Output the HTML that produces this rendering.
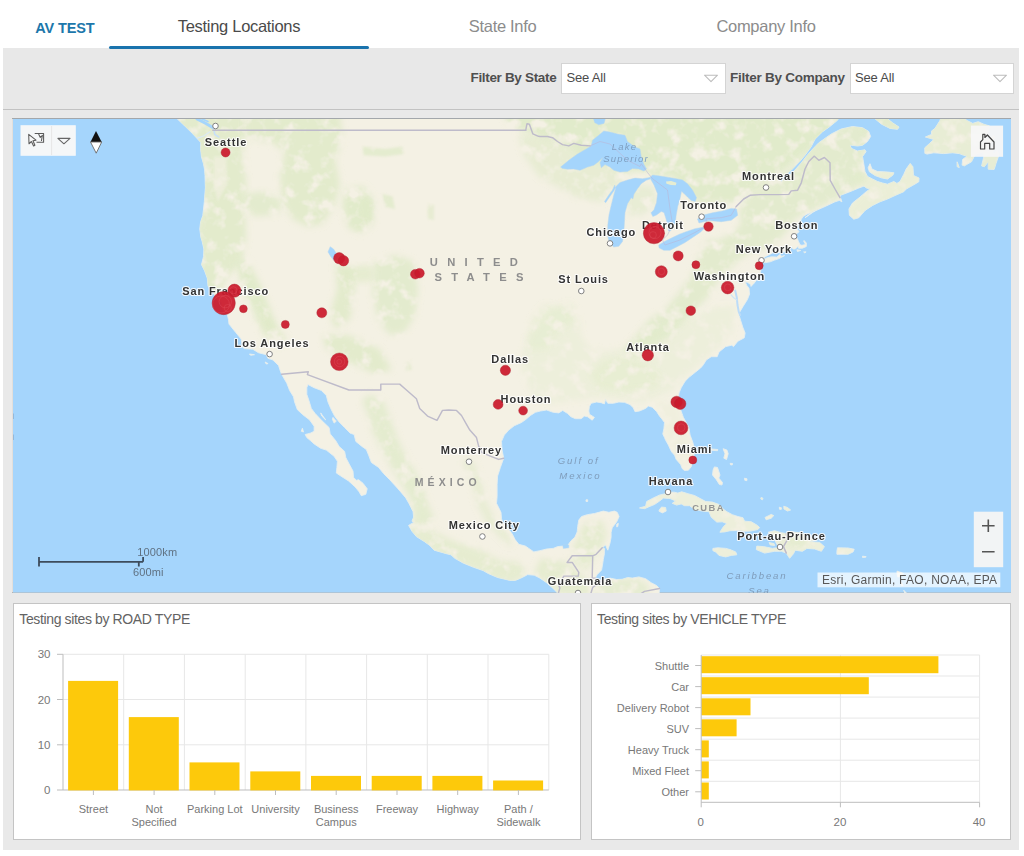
<!DOCTYPE html>
<html lang="en">
<head>
<meta charset="utf-8">
<title>AV TEST</title>
<style>
*{box-sizing:border-box}
html,body{margin:0;padding:0;background:#fff}
body{width:1024px;height:856px;position:relative;overflow:hidden;font-family:"Liberation Sans",sans-serif;color:#4c4c4c}
.abs{position:absolute}
#hdr{left:0;top:0;width:1024px;height:48px;background:#fff}
h1{margin:0}
a{text-decoration:none;display:block}
form{margin:0}
#brand{left:35.3px;top:19.5px;font-size:14.5px;font-weight:bold;color:#1c77ab;letter-spacing:-0.15px;line-height:17px;white-space:nowrap}
.tab{top:15.5px;height:20px;line-height:20px;font-size:16.5px;text-align:center;white-space:nowrap;color:#8c8c8c;letter-spacing:-0.3px}
#tab1{color:#4a4a4a}
#uline{left:109.3px;top:45.7px;width:259.8px;height:3px;background:#1a73ad;border-radius:1.5px;z-index:5}
#shell{left:3px;top:48px;width:1016px;height:802px;background:#e9e9e9}
#fbar{left:3px;top:48px;width:1016px;height:61.8px;background:#e8e8e8;border-bottom:1.6px solid #c2c2c2}
.flabel{top:69.3px;font-size:13.5px;font-weight:bold;color:#4f4f4f;letter-spacing:-0.33px;line-height:18px;white-space:nowrap}
.fsel{top:63px;height:30.5px;background:#fff;border:1px solid #d4d4d4;font-size:13px;line-height:28px;padding-left:4.5px;color:#4c4c4c;letter-spacing:-0.2px}
.panel{background:#fff;border:1px solid #c4c4c4}
.ptitle{margin:0;font-weight:normal;font-size:14px;color:#636363;letter-spacing:-0.37px;line-height:16px;white-space:nowrap}
svg{display:block}
svg text{font-family:"Liberation Sans",sans-serif}
</style>
</head>
<body>
<div id="shell" class="abs"></div>
<header>
<div id="hdr" class="abs"></div>
<h1 id="brand" class="abs">AV TEST</h1>
<nav aria-label="Pages">
<a id="tab1" class="abs tab" role="tab" aria-selected="true" style="left:109px;width:260px">Testing Locations</a>
<a id="tab2" class="abs tab" role="tab" style="left:372.6px;width:260px">State Info</a>
<a id="tab3" class="abs tab" role="tab" style="left:636px;width:260px">Company Info</a>
<div id="uline" class="abs"></div>
</nav>
</header>
<form id="filters">
<div id="fbar" class="abs"></div>
<label class="abs flabel" style="left:470.5px">Filter By State</label>
<div class="abs fsel" role="combobox" aria-label="Filter By State" tabindex="0" style="left:561px;width:164.5px">See All</div>
<svg class="abs" style="left:703px;top:74px" width="16" height="9" viewBox="0 0 16 9" aria-hidden="true"><path d="M1.5 1.2 L14.5 1.2 L8 7.6 Z" fill="none" stroke="#bdbdbd" stroke-width="1.1" stroke-linejoin="round"/></svg>
<label class="abs flabel" style="left:730px;letter-spacing:-0.26px">Filter By Company</label>
<div class="abs fsel" role="combobox" aria-label="Filter By Company" tabindex="0" style="left:849.5px;width:164px">See All</div>
<svg class="abs" style="left:991.5px;top:74px" width="16" height="9" viewBox="0 0 16 9" aria-hidden="true"><path d="M1.5 1.2 L14.5 1.2 L8 7.6 Z" fill="none" stroke="#bdbdbd" stroke-width="1.1" stroke-linejoin="round"/></svg>
</form>
<main>
<section aria-label="Map of testing locations">
<div class="abs" style="left:12.3px;top:118.4px;width:998.7px;height:474.9px;background:linear-gradient(#a3a7ab,#a3a7ab 1px,#e3dfdb 1px,#e3dfdb 473.5px,#b4b4b4 473.5px)"></div>
<svg class="abs" style="left:13px;top:119px" width="998" height="473.5" viewBox="13 119 998 473.5">
<defs><filter id="bl" x="-20%" y="-20%" width="140%" height="140%"><feGaussianBlur stdDeviation="3"/></filter><filter id="bl2" x="-20%" y="-20%" width="140%" height="140%"><feGaussianBlur stdDeviation="1.2"/></filter><filter id="mot" x="13" y="119" width="998" height="474" filterUnits="userSpaceOnUse"><feTurbulence type="fractalNoise" baseFrequency="0.075" numOctaves="3" seed="7" result="n"/><feColorMatrix in="n" type="matrix" values="0 0 0 0 0 0 0 0 0 0 0 0 0 0 0 3.6 0 0 0 -0.85" result="a"/><feComposite in="SourceGraphic" in2="a" operator="in"/></filter><clipPath id="landclip"><path d="M168.3 109.6L176.7 118.3L185.6 126.8L192.5 133.6L197.2 138.6L200.8 142.5L200.6 148.7L201.5 156.9L203.4 163.5L204.5 169.2L205 175.6L205.4 187.6L204.3 201.8L202.8 215.7L200.6 221.9L199.8 228.9L200.8 237L202.2 241.5L203.9 249L203.6 256.4L201.5 264.6L204.7 271L207.3 278.2L208 286.1L213.4 292.6L216.2 299.6L221.7 302.5L221.7 306.7L223.9 312.3L227.3 314.4L228.4 319.2L229 324.1L235.6 332.3L241.2 339.1L242.3 346.9L244.3 348.6L252.9 349.3L258.4 352.7L266.2 354.7L267.9 358.3L272.9 360L278.5 365.4L280.7 372L281.8 374.6L286.8 383.2L289.6 390.4L293.5 396.8L294.6 402L297.4 409.7L302.9 414.8L309.6 419.9L314.1 426.3L314.1 431.3L310.2 433.2L305.2 434.5L306.8 437.6L310.7 440.8L314.1 443.9L320.7 448.3L326.3 450.1L334.1 456.3L337.4 461.3L336.9 467.4L336.3 473L340.8 476L348.5 480.9L355.2 487L359.1 491.8L361.3 495.7L365.8 494.3L367.2 488.8L363 483.3L358.6 479.7L356.3 480.3L353.5 477.3L353 471.1L349.7 465L345.8 457.6L344.6 451.4L339.1 446.4L335.8 440.8L330.2 433.9L329.1 427.6L321.8 420.6L315.2 413.6L311.3 408.4L309 400.7L306.8 394.3L306.8 387.7L307.9 384.5L314.1 387.7L321.3 390.4L326.3 395.5L328 402L330.7 408.4L334.6 416.1L339.1 421.9L344.6 427.6L350.2 433.2L354.1 434.5L355.8 441.4L361.9 446.4L366.3 449.5L368.6 455.1L371.4 462.5L378.6 467.4L383.6 473.6L389.7 479.7L396.4 487L400.6 491.8L405.8 497.9L409.2 503.9L413.1 511.7L413.6 517.1L412 521.2L413.6 522.4L408.6 525.4L412 531.3L416.4 536.6L424.2 541.4L429.8 545.5L434.2 550.2L446.4 553.7L450.9 554.8L454.8 558.3L463.1 563L473.1 567.1L483.2 570.6L488.2 573.5L497.6 577.5L509.9 580.4L515.4 580.4L522.1 577.5L527.7 574.6L534.3 575.2L539.9 578.1L546.6 582.7L553.2 588.5L558.2 593.7L566.6 600L577.7 602.3L656.7 602.3L658.9 596.5L659.5 588.5L656.7 585.6L651.1 582.7L645.6 578.7L638.9 576.9L632.2 578.1L627.8 577.5L622.2 579.3L616.7 579.5L610 578.1L606.1 578.7L602.2 580.4L598.9 579.8L595.5 577.5L597.2 574.6L601.6 570L602.8 563L603.3 559.5L604.4 553.7L604.4 548.4L602.2 547.8L605.5 544.9L607.8 550.2L610 543.1L611.1 537.2L611.1 532.5L612.2 527.8L616.7 521.8L619.1 516.5L617.2 512.3L614.4 511.1L608.9 512.3L603.3 511.1L594.4 513.5L587.2 514.7L581.6 516.5L578.8 520L577.7 526.6L577.2 531.9L574.9 537.2L571 540.8L567.7 545.5L562.7 546.1L557.7 546.6L553.2 548.4L546.6 549L539.9 550.7L533.8 551.9L528.8 548.4L525.4 546.1L518.8 544.3L515.1 539.6L512.1 533.7L507.6 527.8L503.2 523L501.5 518.9L501 512.3L496.5 503.3L497.1 496.7L497.1 484.6L497.6 476L500.4 467.4L503.7 458.2L502.1 450.1L501.5 441.4L504.3 435.1L508.7 430.1L514.3 425.7L521.5 422.5L526 419.3L530.4 415.5L535.4 412.3L540.5 411L546.6 410L553.2 412.3L558.8 412.9L562.7 410.4L567.7 413.6L571 416.8L575.5 418.7L581.1 418.7L584.4 416.1L587.7 416.8L592.2 420.2L594.4 417.4L589.4 414.2L588.8 411L589.4 406.5L591.1 403.3L596.6 402L601.1 402.7L604.4 403.9L605.5 399.4L607.8 403.3L613.3 403.3L618.9 402L624.4 402.3L630 404.6L633.3 407.8L635 411.7L639.5 411L645.6 408.4L648.4 406.1L652.3 407.2L656.7 411.7L659.5 416.1L661.7 418.7L664.5 422.5L663.9 428.8L662.8 433.9L664.5 437.6L665.6 440.1L668.4 445.1L670.1 448.9L671.7 452L674.5 455.1L676.2 459.4L680.6 464.4L682.3 468.7L684.5 470.5L688.4 470.2L691.2 466.8L693.1 460.4L694 455.1L694.5 448.9L692.9 442.6L690.1 435.1L688.7 426.9L686.2 422.5L683.4 417.4L680.6 409.7L679 403.3L678.4 398.1L679 393L681.2 387.7L685.1 381.2L689 377.3L695.6 372L700.6 368L703.4 364.7L706.2 360L711.2 356.7L717.2 356.7L719 352L725.7 346.6L731.8 345.2L733.5 346.6L737.9 341.2L744.3 337.8L745.1 333L742.9 327.5L740.7 320.6L739 315.1L739.6 312.3L742.9 306.7L747.4 299.6L749.6 294L749 288.3L746.8 285.4L745.1 281.8L747.9 282.6L750.7 284.7L750.9 286.4L753.5 284L756.8 279.7L760.2 274.6L760.9 269.6L761.3 264.5L758.5 263.7L760.7 260.8L763.5 257.9L765.7 256.4L770.2 254.2L773.5 252.4L780.2 252.4L783.5 251.9L788 251.2L789.6 249.7L790.8 246L793 249L795.2 249L798.5 246L798.5 248.2L802.4 248.2L806.3 246.5L806.3 243L804.1 240.5L803.6 241.1L805.6 244.5L801.9 245.3L800 244.8L798.5 241.5L796.9 237.8L794.7 236.3L796.3 234L799.1 231.7L796.7 228.7L798 224.9L800.2 221.1L803 216.5L806.9 214.2L811.3 212.6L815.8 210.3L805 217.7L812.5 212.1L825 206.5L835 201.8L840.6 200L840 195.5L850 191.7L858.8 188L864 186.1L866.5 188L870 189L866.2 191.7L860 197.1L852.5 203L849 209L849.4 215.3L853.8 219.2L858.8 217.7L865 210.5L872.5 205.5L880 201.8L887.5 199L895 195.5L903.8 191.7L906.2 189L912.5 185.5L918.8 181.8L919 178L913.5 175.5L912.9 166.8L910.2 163.4L906.2 169L903.8 174.3L900 181.5L896.9 183.4L893.8 181.5L887.5 184.2L882.5 183L877.5 181.5L872.5 179L867.5 176.5L865 171.5L863.8 164L862.5 156.5L866 151.7L865 149.8L857.5 151L851.5 148.5L849.8 145L857.5 146L862.5 145.3L867.5 141.5L870.6 136.5L868.8 131.5L862.5 127.7L852.5 126.5L841.2 129L831.2 134L818.8 142.8L812.5 149.3L806.2 156.5L801.3 163L792.5 172.8L781.2 181.5L780 179L791.2 170.3L800 161.2L805 155.3L811.2 146.7L815 139.2L822.5 131.8L831.2 125.5L837.5 120.2L841.2 114L168.3 109.6ZM760.9 262.6L765.7 262.6L770.2 261.8L774.6 260.1L779.1 258.6L784.6 255.6L781.3 256.4L780.2 254.2L776.9 257.1L771.3 256.8L766.8 257.9L763.5 259.3L761.1 260.8ZM870 163.7L871.9 169L877.5 171.5L887.5 172L894 172.8L892.8 175.2L887.5 179L881.2 177.8L875 175.5L869.4 171.8L868.1 167.8ZM873.8 117.7L881.2 124L890 128.4L897.5 129.3L899 127.1L892.5 122.8L886.2 117.7ZM947.1 109.6L942.1 114.8L939.8 120.8L936.5 126L934.8 128.5L931.5 131.1L931.5 134.4L925.4 137L930.9 138.6L933.7 139.5L929.3 143.7L924.8 147.8L924.8 153.3L927 154.1L933.7 152.8L943.7 153.6L952.6 152.8L959.3 153.6L963.8 155.3L967.1 156.1L962.6 159.4L962.1 165.1L964.3 165.9L971.5 161.8L974.3 156.1L977.1 153.6L982.7 152L983.8 156.9L981.6 165.9L984.3 166.7L988.2 161.8L988.2 169.2L994.1 169.5L996 163.5L998.8 155.3L997.1 150.3L993.8 154.4L992.7 152L995.5 144.5L989.3 151.1L986.6 152L989.3 145.3L994.9 137.8L993.8 135.3L988.2 139.5L985.5 138.6L988.2 131.1L989.7 126L983.8 124.2L978.2 121.7L972.7 123.4L966 120L962.6 113.1L960.4 109.6ZM639.5 507.9L645.6 506.3L646.7 501.5L653.4 497.9L660 494.9L665.6 493.7L668.9 492.1L674.5 492.2L677.8 493.1L681.7 491.8L687.9 493.7L694.5 495.5L700.1 498.5L705.7 501.5L712.3 502.1L719 504.5L723.5 509.3L726.8 511.7L732.4 514.7L737.9 516.5L742.9 517.7L744.6 521.2L751.3 521.8L757.4 525.4L759.6 527.5L757.9 529.5L750.2 531.1L744.6 531.3L739 530.5L730.1 530.7L724.6 531.9L719.9 532.2L723.5 526.6L726.8 523.6L722.3 521.8L716.8 522.1L711.2 517.1L709 511.7L702.3 511.1L694.5 509.3L689.5 505.7L684.5 505.7L681.2 503.9L676.7 505.1L672.3 503.3L675.6 500.9L670.1 498.5L663.4 498.1L658.9 501.5L654.5 504.5L650 506.3L644.5 508.7ZM661.7 507.1L665.6 507.5L666.2 511.1L662.3 512.9L658.9 511.1L660 508.7ZM712.9 548.4L717.9 547.8L725.7 548.4L730.1 549.6L735.7 551.9L736.8 554.8L731.2 555.4L725.7 556.9L719 555.4L715.7 551.9L712.9 550.7ZM768 532.3L774.6 530.7L781.3 532.7L786.3 533.5L788 531.3L798 532.5L805.8 534.3L807.5 538.4L813.6 537.8L814.7 540.2L810.2 541.4L819.7 542.5L824.4 546.6L821.4 551.3L814.7 549L806.9 548.4L802.4 551.3L795.2 550.2L793.5 553.7L789.6 558.3L786.3 553.1L781.3 551.3L774.6 551.3L764.6 553.1L756.3 549.6L756.8 546.1L763.5 546.6L772.4 548.4L776.9 547.8L779.6 547.2L776.9 544.3L775.2 540.8L775.7 536.6L770.7 534.3ZM769.1 542.5L774.1 543.7L774.6 545.5L770.2 544.9ZM837.5 547.8L848.1 548L854.2 549.2L853.1 551.9L848.1 554.3L836.9 554.3L836.9 551.3ZM723.1 448.7L726.9 450L728.2 453.7L726.5 459.5L723.8 458.2L725 453.7ZM711.5 449L717.8 449.5L717.5 450.7L711.9 450.3ZM730.2 463.3L732.5 463.5L732.2 465L730.5 464.8ZM714.4 466.9L717.5 467.5L720 475L718.8 478.1L722.5 482.5L722 485L719.4 484.5L716.2 479.5L712.5 475L713.1 470ZM744.5 478.2L747 478.8L746.8 480.7L744.8 480.3ZM761 497.5L763 498.2L762.5 499.8L760.8 499ZM765 517.5L771.2 514.4L773.8 515.6L771.2 518.2L766.2 519.8ZM779.3 507.2L781.5 507.8L781.2 509.5L779.5 509.3ZM783.8 506.2L787.5 507.5L790.6 510L787.5 511L784 509ZM586 499.8L587.7 499.8L587.7 501.5L586 501.5ZM618.3 523.3L617.8 526.6L616.7 526.9L616.7 524.2ZM862.5 556.2L866.1 556.6L865.9 557.2L862.5 557.4ZM897 571.1L903.7 573.5L899.2 576.9L897.6 576.9L897 573.5ZM900.9 581.6L903.1 585.6L901.5 585.6ZM903.7 590.2L907.6 594.2L905.4 594.8ZM796.9 249.7L800.8 250.5L797.4 251.5ZM803.6 251.9L806.1 251.9L804.7 252.8ZM249.5 354L254.5 354.7L250.6 355.3ZM265.1 362L268.1 363.6L266.2 364ZM302.4 428.2L303.5 432L301.3 431.3ZM333 417.4L336.3 421.2L334.1 423.1L332.4 419.3ZM320.7 412.9L325.7 419.9L321.8 416.1ZM840.8 198.6L841.9 201.8L840.3 201ZM957.1 161.8L959.3 167.5L957.1 166.7Z"/></clipPath></defs>
<rect x="13" y="119" width="998" height="473.5" fill="#a5d5fc"/>
<path d="M168.3 109.6L176.7 118.3L185.6 126.8L192.5 133.6L197.2 138.6L200.8 142.5L200.6 148.7L201.5 156.9L203.4 163.5L204.5 169.2L205 175.6L205.4 187.6L204.3 201.8L202.8 215.7L200.6 221.9L199.8 228.9L200.8 237L202.2 241.5L203.9 249L203.6 256.4L201.5 264.6L204.7 271L207.3 278.2L208 286.1L213.4 292.6L216.2 299.6L221.7 302.5L221.7 306.7L223.9 312.3L227.3 314.4L228.4 319.2L229 324.1L235.6 332.3L241.2 339.1L242.3 346.9L244.3 348.6L252.9 349.3L258.4 352.7L266.2 354.7L267.9 358.3L272.9 360L278.5 365.4L280.7 372L281.8 374.6L286.8 383.2L289.6 390.4L293.5 396.8L294.6 402L297.4 409.7L302.9 414.8L309.6 419.9L314.1 426.3L314.1 431.3L310.2 433.2L305.2 434.5L306.8 437.6L310.7 440.8L314.1 443.9L320.7 448.3L326.3 450.1L334.1 456.3L337.4 461.3L336.9 467.4L336.3 473L340.8 476L348.5 480.9L355.2 487L359.1 491.8L361.3 495.7L365.8 494.3L367.2 488.8L363 483.3L358.6 479.7L356.3 480.3L353.5 477.3L353 471.1L349.7 465L345.8 457.6L344.6 451.4L339.1 446.4L335.8 440.8L330.2 433.9L329.1 427.6L321.8 420.6L315.2 413.6L311.3 408.4L309 400.7L306.8 394.3L306.8 387.7L307.9 384.5L314.1 387.7L321.3 390.4L326.3 395.5L328 402L330.7 408.4L334.6 416.1L339.1 421.9L344.6 427.6L350.2 433.2L354.1 434.5L355.8 441.4L361.9 446.4L366.3 449.5L368.6 455.1L371.4 462.5L378.6 467.4L383.6 473.6L389.7 479.7L396.4 487L400.6 491.8L405.8 497.9L409.2 503.9L413.1 511.7L413.6 517.1L412 521.2L413.6 522.4L408.6 525.4L412 531.3L416.4 536.6L424.2 541.4L429.8 545.5L434.2 550.2L446.4 553.7L450.9 554.8L454.8 558.3L463.1 563L473.1 567.1L483.2 570.6L488.2 573.5L497.6 577.5L509.9 580.4L515.4 580.4L522.1 577.5L527.7 574.6L534.3 575.2L539.9 578.1L546.6 582.7L553.2 588.5L558.2 593.7L566.6 600L577.7 602.3L656.7 602.3L658.9 596.5L659.5 588.5L656.7 585.6L651.1 582.7L645.6 578.7L638.9 576.9L632.2 578.1L627.8 577.5L622.2 579.3L616.7 579.5L610 578.1L606.1 578.7L602.2 580.4L598.9 579.8L595.5 577.5L597.2 574.6L601.6 570L602.8 563L603.3 559.5L604.4 553.7L604.4 548.4L602.2 547.8L605.5 544.9L607.8 550.2L610 543.1L611.1 537.2L611.1 532.5L612.2 527.8L616.7 521.8L619.1 516.5L617.2 512.3L614.4 511.1L608.9 512.3L603.3 511.1L594.4 513.5L587.2 514.7L581.6 516.5L578.8 520L577.7 526.6L577.2 531.9L574.9 537.2L571 540.8L567.7 545.5L562.7 546.1L557.7 546.6L553.2 548.4L546.6 549L539.9 550.7L533.8 551.9L528.8 548.4L525.4 546.1L518.8 544.3L515.1 539.6L512.1 533.7L507.6 527.8L503.2 523L501.5 518.9L501 512.3L496.5 503.3L497.1 496.7L497.1 484.6L497.6 476L500.4 467.4L503.7 458.2L502.1 450.1L501.5 441.4L504.3 435.1L508.7 430.1L514.3 425.7L521.5 422.5L526 419.3L530.4 415.5L535.4 412.3L540.5 411L546.6 410L553.2 412.3L558.8 412.9L562.7 410.4L567.7 413.6L571 416.8L575.5 418.7L581.1 418.7L584.4 416.1L587.7 416.8L592.2 420.2L594.4 417.4L589.4 414.2L588.8 411L589.4 406.5L591.1 403.3L596.6 402L601.1 402.7L604.4 403.9L605.5 399.4L607.8 403.3L613.3 403.3L618.9 402L624.4 402.3L630 404.6L633.3 407.8L635 411.7L639.5 411L645.6 408.4L648.4 406.1L652.3 407.2L656.7 411.7L659.5 416.1L661.7 418.7L664.5 422.5L663.9 428.8L662.8 433.9L664.5 437.6L665.6 440.1L668.4 445.1L670.1 448.9L671.7 452L674.5 455.1L676.2 459.4L680.6 464.4L682.3 468.7L684.5 470.5L688.4 470.2L691.2 466.8L693.1 460.4L694 455.1L694.5 448.9L692.9 442.6L690.1 435.1L688.7 426.9L686.2 422.5L683.4 417.4L680.6 409.7L679 403.3L678.4 398.1L679 393L681.2 387.7L685.1 381.2L689 377.3L695.6 372L700.6 368L703.4 364.7L706.2 360L711.2 356.7L717.2 356.7L719 352L725.7 346.6L731.8 345.2L733.5 346.6L737.9 341.2L744.3 337.8L745.1 333L742.9 327.5L740.7 320.6L739 315.1L739.6 312.3L742.9 306.7L747.4 299.6L749.6 294L749 288.3L746.8 285.4L745.1 281.8L747.9 282.6L750.7 284.7L750.9 286.4L753.5 284L756.8 279.7L760.2 274.6L760.9 269.6L761.3 264.5L758.5 263.7L760.7 260.8L763.5 257.9L765.7 256.4L770.2 254.2L773.5 252.4L780.2 252.4L783.5 251.9L788 251.2L789.6 249.7L790.8 246L793 249L795.2 249L798.5 246L798.5 248.2L802.4 248.2L806.3 246.5L806.3 243L804.1 240.5L803.6 241.1L805.6 244.5L801.9 245.3L800 244.8L798.5 241.5L796.9 237.8L794.7 236.3L796.3 234L799.1 231.7L796.7 228.7L798 224.9L800.2 221.1L803 216.5L806.9 214.2L811.3 212.6L815.8 210.3L805 217.7L812.5 212.1L825 206.5L835 201.8L840.6 200L840 195.5L850 191.7L858.8 188L864 186.1L866.5 188L870 189L866.2 191.7L860 197.1L852.5 203L849 209L849.4 215.3L853.8 219.2L858.8 217.7L865 210.5L872.5 205.5L880 201.8L887.5 199L895 195.5L903.8 191.7L906.2 189L912.5 185.5L918.8 181.8L919 178L913.5 175.5L912.9 166.8L910.2 163.4L906.2 169L903.8 174.3L900 181.5L896.9 183.4L893.8 181.5L887.5 184.2L882.5 183L877.5 181.5L872.5 179L867.5 176.5L865 171.5L863.8 164L862.5 156.5L866 151.7L865 149.8L857.5 151L851.5 148.5L849.8 145L857.5 146L862.5 145.3L867.5 141.5L870.6 136.5L868.8 131.5L862.5 127.7L852.5 126.5L841.2 129L831.2 134L818.8 142.8L812.5 149.3L806.2 156.5L801.3 163L792.5 172.8L781.2 181.5L780 179L791.2 170.3L800 161.2L805 155.3L811.2 146.7L815 139.2L822.5 131.8L831.2 125.5L837.5 120.2L841.2 114L168.3 109.6ZM760.9 262.6L765.7 262.6L770.2 261.8L774.6 260.1L779.1 258.6L784.6 255.6L781.3 256.4L780.2 254.2L776.9 257.1L771.3 256.8L766.8 257.9L763.5 259.3L761.1 260.8ZM870 163.7L871.9 169L877.5 171.5L887.5 172L894 172.8L892.8 175.2L887.5 179L881.2 177.8L875 175.5L869.4 171.8L868.1 167.8ZM873.8 117.7L881.2 124L890 128.4L897.5 129.3L899 127.1L892.5 122.8L886.2 117.7ZM947.1 109.6L942.1 114.8L939.8 120.8L936.5 126L934.8 128.5L931.5 131.1L931.5 134.4L925.4 137L930.9 138.6L933.7 139.5L929.3 143.7L924.8 147.8L924.8 153.3L927 154.1L933.7 152.8L943.7 153.6L952.6 152.8L959.3 153.6L963.8 155.3L967.1 156.1L962.6 159.4L962.1 165.1L964.3 165.9L971.5 161.8L974.3 156.1L977.1 153.6L982.7 152L983.8 156.9L981.6 165.9L984.3 166.7L988.2 161.8L988.2 169.2L994.1 169.5L996 163.5L998.8 155.3L997.1 150.3L993.8 154.4L992.7 152L995.5 144.5L989.3 151.1L986.6 152L989.3 145.3L994.9 137.8L993.8 135.3L988.2 139.5L985.5 138.6L988.2 131.1L989.7 126L983.8 124.2L978.2 121.7L972.7 123.4L966 120L962.6 113.1L960.4 109.6ZM639.5 507.9L645.6 506.3L646.7 501.5L653.4 497.9L660 494.9L665.6 493.7L668.9 492.1L674.5 492.2L677.8 493.1L681.7 491.8L687.9 493.7L694.5 495.5L700.1 498.5L705.7 501.5L712.3 502.1L719 504.5L723.5 509.3L726.8 511.7L732.4 514.7L737.9 516.5L742.9 517.7L744.6 521.2L751.3 521.8L757.4 525.4L759.6 527.5L757.9 529.5L750.2 531.1L744.6 531.3L739 530.5L730.1 530.7L724.6 531.9L719.9 532.2L723.5 526.6L726.8 523.6L722.3 521.8L716.8 522.1L711.2 517.1L709 511.7L702.3 511.1L694.5 509.3L689.5 505.7L684.5 505.7L681.2 503.9L676.7 505.1L672.3 503.3L675.6 500.9L670.1 498.5L663.4 498.1L658.9 501.5L654.5 504.5L650 506.3L644.5 508.7ZM661.7 507.1L665.6 507.5L666.2 511.1L662.3 512.9L658.9 511.1L660 508.7ZM712.9 548.4L717.9 547.8L725.7 548.4L730.1 549.6L735.7 551.9L736.8 554.8L731.2 555.4L725.7 556.9L719 555.4L715.7 551.9L712.9 550.7ZM768 532.3L774.6 530.7L781.3 532.7L786.3 533.5L788 531.3L798 532.5L805.8 534.3L807.5 538.4L813.6 537.8L814.7 540.2L810.2 541.4L819.7 542.5L824.4 546.6L821.4 551.3L814.7 549L806.9 548.4L802.4 551.3L795.2 550.2L793.5 553.7L789.6 558.3L786.3 553.1L781.3 551.3L774.6 551.3L764.6 553.1L756.3 549.6L756.8 546.1L763.5 546.6L772.4 548.4L776.9 547.8L779.6 547.2L776.9 544.3L775.2 540.8L775.7 536.6L770.7 534.3ZM769.1 542.5L774.1 543.7L774.6 545.5L770.2 544.9ZM837.5 547.8L848.1 548L854.2 549.2L853.1 551.9L848.1 554.3L836.9 554.3L836.9 551.3ZM723.1 448.7L726.9 450L728.2 453.7L726.5 459.5L723.8 458.2L725 453.7ZM711.5 449L717.8 449.5L717.5 450.7L711.9 450.3ZM730.2 463.3L732.5 463.5L732.2 465L730.5 464.8ZM714.4 466.9L717.5 467.5L720 475L718.8 478.1L722.5 482.5L722 485L719.4 484.5L716.2 479.5L712.5 475L713.1 470ZM744.5 478.2L747 478.8L746.8 480.7L744.8 480.3ZM761 497.5L763 498.2L762.5 499.8L760.8 499ZM765 517.5L771.2 514.4L773.8 515.6L771.2 518.2L766.2 519.8ZM779.3 507.2L781.5 507.8L781.2 509.5L779.5 509.3ZM783.8 506.2L787.5 507.5L790.6 510L787.5 511L784 509ZM586 499.8L587.7 499.8L587.7 501.5L586 501.5ZM618.3 523.3L617.8 526.6L616.7 526.9L616.7 524.2ZM862.5 556.2L866.1 556.6L865.9 557.2L862.5 557.4ZM897 571.1L903.7 573.5L899.2 576.9L897.6 576.9L897 573.5ZM900.9 581.6L903.1 585.6L901.5 585.6ZM903.7 590.2L907.6 594.2L905.4 594.8ZM796.9 249.7L800.8 250.5L797.4 251.5ZM803.6 251.9L806.1 251.9L804.7 252.8ZM249.5 354L254.5 354.7L250.6 355.3ZM265.1 362L268.1 363.6L266.2 364ZM302.4 428.2L303.5 432L301.3 431.3ZM333 417.4L336.3 421.2L334.1 423.1L332.4 419.3ZM320.7 412.9L325.7 419.9L321.8 416.1ZM840.8 198.6L841.9 201.8L840.3 201ZM957.1 161.8L959.3 167.5L957.1 166.7Z" fill="#f4f1e4" stroke="#e6eeee" stroke-width="0.9" stroke-linejoin="round"/>
<g clip-path="url(#landclip)"><g filter="url(#mot)"><path d="M499.8 109.6L509.9 125.1L538.8 137L566.6 143.7L577.7 153.6L594.4 160.2L616.7 166.7L638.9 171.6L655.6 176.4L672.3 176.4L687.9 195.5L700.1 203.3L716.8 201.8L732.4 203.3L747.9 192.3L761.3 189.2L772.4 179.6L789.1 166.7L803.6 155.3L822.5 138.6L839.2 125.1L850.3 109.6L499.8 109.6Z" fill="#dfeac8" fill-opacity="0.9" filter="url(#bl)"/><path d="M518.8 133.6L523.2 153.6L538.8 176.4L556.6 186L572.2 195.5L588.8 200.2L603.3 201.8L612.2 192.3L622.2 179.6L638.9 166.7L605.5 155.3L583.3 147L549.9 137Z" fill="#dfeac8" fill-opacity="0.6" filter="url(#bl)"/><path d="M632.2 184.4L654.5 186L656.7 204.9L643.4 214.2L630 215.7L625.6 203.3Z" fill="#dfeac8" fill-opacity="0.55" filter="url(#bl)"/><path d="M750.2 192.3L739 211.1L741.3 223.4L733.5 232.5L722.3 238.5L705.7 241.5L699 251.9L696.8 266.6L687.9 281.1L676.7 295.4L665.6 309.5L650 319.2L638.9 333L627.8 345.2L624.4 354.7L633.3 357.4L647.8 347.9L665.6 338.5L681.2 324.8L694.5 310.9L707.9 296.8L716.8 282.6L730.1 268.1L741.3 257.9L752.4 251.9L765.7 247.5L776.9 241.5L785.8 232.5L794.7 218.8L810.2 211.1L828 203.3L844.7 195.5L867 179.6L861.4 163.5L867 147L872.5 121.7L850.3 123.4L828 133.6L808 150.3L796.9 163.5L783.5 174.8L766.8 187.6Z" fill="#dfeac8" fill-opacity="0.8" filter="url(#bl)"/><path d="M855.8 176.4L914.8 158.6L922.6 179.6L905.9 195.5L855.8 223.4L843.6 211.1L861.4 192.3Z" fill="#dfeac8" fill-opacity="0.45" filter="url(#bl)"/><path d="M919.3 109.6L1006 109.6L1000.5 173.2L956 171.6L921.5 156.9Z" fill="#dfeac8" fill-opacity="0.55" filter="url(#bl)"/><path d="M861.4 109.6L905.9 109.6L902.6 131.9L864.7 130.2Z" fill="#dfeac8" fill-opacity="0.8" filter="url(#bl)"/><path d="M735.7 306.7L730.1 337.1L714.6 350.6L699 364L683.4 377.3L672.3 390.4L644.5 402L622.2 399.4L600 396.8L577.7 399.4L555.5 403.3L535.4 399.4L523.2 374.6L522.1 354.7L527.7 338.5L538.8 323.4L552.1 308.1L569.9 302.5L578.8 313.7L579.9 333L587.7 346.6L605.5 352L622.2 347.9L644.5 334.4L666.7 327.5L694.5 316.4L716.8 306.7Z" fill="#dfeac8" fill-opacity="0.3" filter="url(#bl)"/><path d="M543.2 305.3L572.2 308.1L574.4 322L555.5 335.7L547.7 349.3L527.7 350.6L527.7 334.4L532.1 319.2Z" fill="#dfeac8" fill-opacity="0.4" filter="url(#bl)"/><path d="M644.5 364L661.2 374.6L655.6 387.7L627.8 391.7L600 389L588.8 374.6L605.5 360L627.8 357.4Z" fill="#dfeac8" fill-opacity="0.45" filter="url(#bl)"/><path d="M655.6 400.7L676.7 403.3L681.2 419.9L687.9 438.9L690.1 453.9L687.9 466.2L681.2 466.2L674.5 451.4L666.7 432.6L661.2 416.1Z" fill="#dfeac8" fill-opacity="0.2" filter="url(#bl)"/><path d="M369.7 394.3L383 400.7L390.8 419.9L397.5 438.9L406.4 457.6L417.5 476L425.3 494.3L428.6 506.3L434.2 518.3L427.5 525.4L412 524.2L414.2 512.3L410.8 500.3L404.2 488.2L393 469.9L381.9 451.4L373 432.6L367.5 413.6L361.9 400.7Z" fill="#dfeac8" fill-opacity="0.75" filter="url(#bl)"/><path d="M466.5 457.6L474.3 463.8L482 482.1L485.4 500.3L494.3 518.3L505.4 530.1L512.1 541.9L509.9 546.6L498.7 536L485.4 520.6L476.5 502.7L472 482.1L463.1 463.8Z" fill="#dfeac8" fill-opacity="0.6" filter="url(#bl)"/><path d="M409.7 524.2L433.1 531.3L449.8 539.6L466.5 545.5L483.2 551.3L494.3 558.3L505.4 561.8L516.5 561.8L524.3 567.7L524.3 576.9L511 582.7L494.3 579.3L477.6 571.1L449.8 559.5L422 544.3L405.3 530.1Z" fill="#dfeac8" fill-opacity="0.7" filter="url(#bl)"/><path d="M541 558.3L565.5 561.8L581.1 574.6L590 583.9L590 595.4L561 595.4L544.3 582.7L534.3 572.3Z" fill="#dfeac8" fill-opacity="0.7" filter="url(#bl)"/><path d="M584.4 523L602.2 520.6L606.6 534.9L600 551.3L591.1 563L587.7 570L572.2 563L572.2 549L578.8 536Z" fill="#dfeac8" fill-opacity="0.7" filter="url(#bl)"/><path d="M605.5 579.3L636.7 578.1L650 586.2L643.4 600L600 600L594.4 588.5Z" fill="#dfeac8" fill-opacity="0.65" filter="url(#bl)"/><path d="M633.3 488.2L761.3 488.2L833.6 524.2L861.4 559.5L705.7 565.3L633.3 518.3Z" fill="#dfeac8" fill-opacity="0.3" filter="url(#bl)"/><path d="M788 534.9L805.8 537.2L811.3 543.1L802.4 547.8L788 546.6L783.5 540.8Z" fill="#dfeac8" fill-opacity="0.6" filter="url(#bl)"/><path d="M170 114L245 114L246.2 134L242.5 151.5L246.2 181.5L245 214L246.2 236.5L242.5 259L235 269L225 279L220 294L202.5 294L197.5 269L197.5 231.5L202.5 194L197.5 156.5L182.5 134Z" fill="#dfeac8" fill-opacity="0.85" filter="url(#bl)"/><path d="M213.8 156.5L226.2 156.5L227.5 184L217.5 201.5L213.8 184Z" fill="#f4f1e4" fill-opacity="0.55" filter="url(#bl2)"/><path d="M235 259L247.5 261.5L260 284L270 309L277.5 329L267.5 331.5L255 314L242.5 289Z" fill="#dfeac8" fill-opacity="0.9" filter="url(#bl)"/><path d="M245 114L340 114L342.5 139L335 159L340 184L335 204L322.5 224L307.5 226.5L292.5 219L282.5 201.5L280 176.5L285 151.5L270 141.5L245 139Z" fill="#dfeac8" fill-opacity="0.85" filter="url(#bl)"/><path d="M245 194L265 191.5L282.5 201.5L277.5 214L255 216.5L242.5 206.5Z" fill="#dfeac8" fill-opacity="0.8" filter="url(#bl)"/><path d="M345 189L365 186.5L375 201.5L372.5 224L360 234L347.5 226.5L342.5 206.5Z" fill="#dfeac8" fill-opacity="0.9" filter="url(#bl)"/><path d="M362.5 146.5L385 149L402.5 146.5L403.8 154L385 156.5L363.8 155.2Z" fill="#dfeac8" fill-opacity="0.75" filter="url(#bl2)"/><path d="M382.5 194L392.5 196.5L395 209L385 206.5Z" fill="#dfeac8" fill-opacity="0.75" filter="url(#bl2)"/><path d="M335 264L352.5 266.5L355 289L350 319L335 329L330 314L337.5 289Z" fill="#dfeac8" fill-opacity="0.85" filter="url(#bl)"/><path d="M374 262L395 255L414 262L418 290L415 315L405 332L390 335L378 320L373 295Z" fill="#dfeac8" fill-opacity="0.8" filter="url(#bl)"/><path d="M343 267L372 265L374 281L345 283Z" fill="#dfeac8" fill-opacity="0.7" filter="url(#bl)"/><path d="M361 200L371 202L372 224L362 222Z" fill="#dfeac8" fill-opacity="0.6" filter="url(#bl2)"/><path d="M427 204L434 205L434 220L428 219Z" fill="#dfeac8" fill-opacity="0.6" filter="url(#bl2)"/><path d="M322.8 335L347.9 335L379.2 349.1L391.7 369.5L376 374.2L347.9 361.6L325.9 347.6Z" fill="#dfeac8" fill-opacity="0.85" filter="url(#bl)"/><path d="M404.2 363.2L410.5 360.1L412 369.5L405.8 371Z" fill="#dfeac8" fill-opacity="0.6" filter="url(#bl2)"/><path d="M253.9 313.1L272.7 322.5L288.4 339.7L279 346L263.3 335Z" fill="#dfeac8" fill-opacity="0.7" filter="url(#bl)"/></g></g>
<path d="M560.6 167.1L568.8 160.3L577.5 154L586.2 149L591.2 145.9L592.5 140.3L598.7 135.3L603.8 130.9L610 132.1L617.5 134L625 135.3L627.5 141.5L635 147.1L640 149L641.2 156.5L643.7 164L646.5 169L644 171L638.8 169L632.5 168.4L627.5 171.5L620 172.1L613.8 170.3L610 167.1L605 164.6L601.3 167.8L600 162.7L602.8 157.5L598.7 161.5L593.8 165.2L587.5 167.1L580 170.3L573.8 169L567.5 169.2L562.5 168.5ZM650 177.5L642.5 178.7L635 178.1L627.5 180L620 182.5L616.2 186.2L614 190.6L610 196.2L605.6 202.7L604.5 201.5L608.8 195L612.5 190L614.8 185L615.6 188.7L613.5 196.2L611 206.3L609 215L607.8 225L607.5 235L609.2 242.5L613.8 247L618.8 246.2L622.5 241.5L623.8 232.5L624.4 222.5L625 212.5L627.5 203.7L631.2 197.7L632.8 199L634 194L637.5 188.7L641.2 183.7L646.2 180.3L650 179ZM650 177.5L652.5 175L660 176L667.5 177.2L675 178.5L682.5 180L687.5 183.7L692.5 190L696.5 197.5L695.3 201.5L691.2 200.5L687.5 197L684 193.5L681.5 191.2L680 198.7L677.8 206.3L676.2 215L675.2 223.7L670 228.1L667.5 225L666 218.7L664 212.5L661.2 211.5L656.5 215L652.8 216.5L651 212.8L654 209.8L656.5 202.5L657.5 193.7L654 185L651 179.8ZM658.8 245L665 241.3L672.5 237.5L680 234L687.5 231.2L695 228.7L702.8 227.3L704.2 228.5L700 232.5L692.5 237.5L685 242.5L677.5 246.5L670 250.3L663.8 250.3L659 247.8ZM697.5 219L702.5 215.3L712.5 212.8L722.5 210.9L731.2 208.4L736.5 209L737.7 215.3L731.2 220.3L721.2 221.7L708.8 220.5L699 223ZM668.1 228.1L670.6 228.1L671 230.6L668.5 231ZM330.2 246.7L333.5 249L336.9 254.2L336.9 259.3L333.5 260.1L330.7 256.4L328 251.9ZM593.1 117.7L605.6 117.7L604 123.4L598.7 124.7L594.8 122.8ZM562.7 544.9L568.8 544.9L568.8 547.8L563.3 548.4Z" fill="#a5d5fc" stroke="#b7d6ef" stroke-width="0.5" stroke-linejoin="round"/>
<path d="M666 181.5L671.2 181L676.5 182.8L675.8 185.2L670.8 185L666.5 183.7Z" fill="#e6edd2"/>
<path d="M197 119L205.5 123.2L213.5 128" fill="none" stroke="#a5d5fc" stroke-width="3" stroke-linecap="round"/><path d="M201 118.5L208 121.5" fill="none" stroke="#a5d5fc" stroke-width="1.6" stroke-linecap="round"/><path d="M213.5 128L214.8 134.5L218.8 137" fill="none" stroke="#c9e0f6" stroke-width="1.6" stroke-linecap="round" stroke-linejoin="round"/><path d="M197.5 138.2L203.5 136L210 131.8" fill="none" stroke="#dbe9f3" stroke-width="1.3" stroke-linecap="round" stroke-linejoin="round"/><path d="M735.2 290.6L736.8 297.5L737.5 305L738.8 311.9L740.2 315.2" fill="none" stroke="#bcdcf8" stroke-width="2" stroke-linecap="round" stroke-linejoin="round"/><path d="M731.2 295L734 298.1L737 300" fill="none" stroke="#cfe4f5" stroke-width="1.2" stroke-linecap="round" stroke-linejoin="round"/>

<path d="M590 145.9L600 141.5L610 144L627.5 160.3L640 166.5L641.2 163.7L647.5 172.5L652.5 178.7L667.5 190L670 208.8L672.5 223.7L670 228.1L669.4 231.2L667.5 235L662.5 240L665 245L680 240L695 232.5L703.8 227.5L704.7 223.7L706.2 221.9L706.2 218.7L721.2 217.7L731.2 215.3L736.2 206.5" fill="none" stroke="#b9b4d6" stroke-opacity="0.55" stroke-width="1" stroke-linejoin="round" stroke-linecap="round"/>
<path d="M212.8 130.2L526 130.2L525.8 129.9L527 123.7L529.3 124.1L532.8 133.8M532.8 133.8L538.5 136.3L540 136.5L547.5 136.5L552.5 137.7L557.5 141.5L562.5 144.6L568.8 145.9L573.8 143.4L581.2 145.3L590 145.9M736.2 206.5L743.7 199L750 195.3L760 194.6L777.5 194.6L788.8 194.4L791.2 190.9L797.5 190.3L801.3 182.8L805 169L808.8 161.5L813.8 156.5L814.4 156.3L818.8 160.3L824.4 157.5L830 162.7L830.2 180.3L835 189L840 197.7M281.6 374.2L308.3 371.7L307.4 374.6L348.9 390L380.8 390L380.8 384.1L399.7 384.1L405.3 389L416.4 398.8L419.7 408.4L427.5 416.1L437 420.3L442.5 410.4L448.7 410L456.5 410.4L461.5 415.5L466.5 424.4L469.8 430.1L476.5 437.6L478.7 446.4L482 452.6L490.9 456.3L498.7 459.4L503.7 458.2M558.2 593.7L559.9 587.9L558.8 585.6L563.8 576.1L578.3 576.1L578.8 572.3L572.2 562.4L567.1 562.4L572.2 555.8L592.7 555.8M592.7 555.8L596.1 554.3L602.2 547.8M592.7 555.8L592.2 578.1L595.5 578.1M602.8 580.2L592.7 587.3L590.5 594.8M590.5 594.8L582.2 600L582.2 602.8M590.5 594.8L600 600L608.9 601.7M659.5 588.5L644.5 591.4L631.1 600L624.4 602.3M786.3 533.7L787.4 539.6L783.5 546.6L786.3 553.1" fill="none" stroke="#bebbca" stroke-width="1.45" stroke-linejoin="round" stroke-linecap="round"/>
<circle cx="215.5" cy="126" r="2.8" fill="#fff" stroke="#808080" stroke-width="1"/><circle cx="269.6" cy="354.1" r="2.8" fill="#fff" stroke="#808080" stroke-width="1"/><circle cx="469" cy="461.7" r="2.8" fill="#fff" stroke="#808080" stroke-width="1"/><circle cx="482.4" cy="536.5" r="2.8" fill="#fff" stroke="#808080" stroke-width="1"/><circle cx="578" cy="593" r="2.8" fill="#fff" stroke="#808080" stroke-width="1"/><circle cx="668" cy="492" r="2.8" fill="#fff" stroke="#808080" stroke-width="1"/><circle cx="780" cy="547" r="2.8" fill="#fff" stroke="#808080" stroke-width="1"/><circle cx="581.3" cy="291" r="2.8" fill="#fff" stroke="#808080" stroke-width="1"/><circle cx="610" cy="243.4" r="2.8" fill="#fff" stroke="#808080" stroke-width="1"/><circle cx="701.6" cy="216.7" r="2.8" fill="#fff" stroke="#808080" stroke-width="1"/><circle cx="766" cy="187.5" r="2.8" fill="#fff" stroke="#808080" stroke-width="1"/><circle cx="794.1" cy="236.3" r="2.8" fill="#fff" stroke="#808080" stroke-width="1"/><circle cx="761.5" cy="260.3" r="2.8" fill="#fff" stroke="#808080" stroke-width="1"/><text x="429.8" y="266.3" text-anchor="start" font-size="11.2" font-weight="bold" letter-spacing="9.3" fill="#8d8d8d">UNITED</text><text x="434.4" y="280.6" text-anchor="start" font-size="11.2" font-weight="bold" letter-spacing="9.3" fill="#8d8d8d">STATES</text><text x="414.7" y="486.4" text-anchor="start" font-size="10.5" font-weight="bold" letter-spacing="4.1" fill="#8d8d8d">MÉXICO</text><text x="708.6" y="510.7" text-anchor="middle" font-size="9.3" font-weight="bold" letter-spacing="1.5" fill="#949494">CUBA</text><text x="624.5" y="149.5" text-anchor="middle" font-size="9.5" font-weight="normal" letter-spacing="1.2" font-style="italic" fill="#7f9fc0">Lake</text><text x="626" y="161.5" text-anchor="middle" font-size="9.5" font-weight="normal" letter-spacing="1.2" font-style="italic" fill="#7f9fc0">Superior</text><text x="578.6" y="463.8" text-anchor="middle" font-size="9.6" font-weight="normal" letter-spacing="1.95" font-style="italic" fill="#7f9cba">Gulf of</text><text x="580.4" y="479" text-anchor="middle" font-size="9.6" font-weight="normal" letter-spacing="1.95" font-style="italic" fill="#7f9cba">Mexico</text><text x="757" y="579.2" text-anchor="middle" font-size="9.6" font-weight="normal" letter-spacing="1.85" font-style="italic" fill="#7f9cba">Caribbean</text><text x="759.5" y="593.8" text-anchor="middle" font-size="9.6" font-weight="normal" letter-spacing="1.85" font-style="italic" fill="#7f9cba">Sea</text><text x="226" y="146.2" text-anchor="middle" font-size="11" font-weight="bold" letter-spacing="0.9" fill="none" stroke="#fff" stroke-opacity="0.85" stroke-width="2.2" stroke-linejoin="round">Seattle</text><text x="226" y="146.2" text-anchor="middle" font-size="11" font-weight="bold" letter-spacing="0.9" fill="#333">Seattle</text><text x="225.6" y="294.9" text-anchor="middle" font-size="11" font-weight="bold" letter-spacing="0.9" fill="none" stroke="#fff" stroke-opacity="0.85" stroke-width="2.2" stroke-linejoin="round">San Francisco</text><text x="225.6" y="294.9" text-anchor="middle" font-size="11" font-weight="bold" letter-spacing="0.9" fill="#333">San Francisco</text><text x="272" y="346.5" text-anchor="middle" font-size="11" font-weight="bold" letter-spacing="0.9" fill="none" stroke="#fff" stroke-opacity="0.85" stroke-width="2.2" stroke-linejoin="round">Los Angeles</text><text x="272" y="346.5" text-anchor="middle" font-size="11" font-weight="bold" letter-spacing="0.9" fill="#333">Los Angeles</text><text x="510.2" y="363.2" text-anchor="middle" font-size="11" font-weight="bold" letter-spacing="0.9" fill="none" stroke="#fff" stroke-opacity="0.85" stroke-width="2.2" stroke-linejoin="round">Dallas</text><text x="510.2" y="363.2" text-anchor="middle" font-size="11" font-weight="bold" letter-spacing="0.9" fill="#333">Dallas</text><text x="526" y="403" text-anchor="middle" font-size="11" font-weight="bold" letter-spacing="0.9" fill="none" stroke="#fff" stroke-opacity="0.85" stroke-width="2.2" stroke-linejoin="round">Houston</text><text x="526" y="403" text-anchor="middle" font-size="11" font-weight="bold" letter-spacing="0.9" fill="#333">Houston</text><text x="471.4" y="454" text-anchor="middle" font-size="11" font-weight="bold" letter-spacing="0.9" fill="none" stroke="#fff" stroke-opacity="0.85" stroke-width="2.2" stroke-linejoin="round">Monterrey</text><text x="471.4" y="454" text-anchor="middle" font-size="11" font-weight="bold" letter-spacing="0.9" fill="#333">Monterrey</text><text x="484.2" y="529" text-anchor="middle" font-size="11" font-weight="bold" letter-spacing="0.9" fill="none" stroke="#fff" stroke-opacity="0.85" stroke-width="2.2" stroke-linejoin="round">Mexico City</text><text x="484.2" y="529" text-anchor="middle" font-size="11" font-weight="bold" letter-spacing="0.9" fill="#333">Mexico City</text><text x="580" y="585" text-anchor="middle" font-size="11" font-weight="bold" letter-spacing="0.9" fill="none" stroke="#fff" stroke-opacity="0.85" stroke-width="2.2" stroke-linejoin="round">Guatemala</text><text x="580" y="585" text-anchor="middle" font-size="11" font-weight="bold" letter-spacing="0.9" fill="#333">Guatemala</text><text x="671" y="485" text-anchor="middle" font-size="11" font-weight="bold" letter-spacing="0.9" fill="none" stroke="#fff" stroke-opacity="0.85" stroke-width="2.2" stroke-linejoin="round">Havana</text><text x="671" y="485" text-anchor="middle" font-size="11" font-weight="bold" letter-spacing="0.9" fill="#333">Havana</text><text x="694.5" y="453" text-anchor="middle" font-size="11" font-weight="bold" letter-spacing="0.9" fill="none" stroke="#fff" stroke-opacity="0.85" stroke-width="2.2" stroke-linejoin="round">Miami</text><text x="694.5" y="453" text-anchor="middle" font-size="11" font-weight="bold" letter-spacing="0.9" fill="#333">Miami</text><text x="781.5" y="540" text-anchor="middle" font-size="11" font-weight="bold" letter-spacing="0.9" fill="none" stroke="#fff" stroke-opacity="0.85" stroke-width="2.2" stroke-linejoin="round">Port-au-Prince</text><text x="781.5" y="540" text-anchor="middle" font-size="11" font-weight="bold" letter-spacing="0.9" fill="#333">Port-au-Prince</text><text x="648" y="351" text-anchor="middle" font-size="11" font-weight="bold" letter-spacing="0.9" fill="none" stroke="#fff" stroke-opacity="0.85" stroke-width="2.2" stroke-linejoin="round">Atlanta</text><text x="648" y="351" text-anchor="middle" font-size="11" font-weight="bold" letter-spacing="0.9" fill="#333">Atlanta</text><text x="583.6" y="283.3" text-anchor="middle" font-size="11" font-weight="bold" letter-spacing="0.9" fill="none" stroke="#fff" stroke-opacity="0.85" stroke-width="2.2" stroke-linejoin="round">St Louis</text><text x="583.6" y="283.3" text-anchor="middle" font-size="11" font-weight="bold" letter-spacing="0.9" fill="#333">St Louis</text><text x="611.3" y="236.2" text-anchor="middle" font-size="11" font-weight="bold" letter-spacing="0.9" fill="none" stroke="#fff" stroke-opacity="0.85" stroke-width="2.2" stroke-linejoin="round">Chicago</text><text x="611.3" y="236.2" text-anchor="middle" font-size="11" font-weight="bold" letter-spacing="0.9" fill="#333">Chicago</text><text x="662.9" y="229" text-anchor="middle" font-size="11" font-weight="bold" letter-spacing="0.9" fill="none" stroke="#fff" stroke-opacity="0.85" stroke-width="2.2" stroke-linejoin="round">Detroit</text><text x="662.9" y="229" text-anchor="middle" font-size="11" font-weight="bold" letter-spacing="0.9" fill="#333">Detroit</text><text x="703.7" y="208.8" text-anchor="middle" font-size="11" font-weight="bold" letter-spacing="0.9" fill="none" stroke="#fff" stroke-opacity="0.85" stroke-width="2.2" stroke-linejoin="round">Toronto</text><text x="703.7" y="208.8" text-anchor="middle" font-size="11" font-weight="bold" letter-spacing="0.9" fill="#333">Toronto</text><text x="768.5" y="180" text-anchor="middle" font-size="11" font-weight="bold" letter-spacing="0.9" fill="none" stroke="#fff" stroke-opacity="0.85" stroke-width="2.2" stroke-linejoin="round">Montreal</text><text x="768.5" y="180" text-anchor="middle" font-size="11" font-weight="bold" letter-spacing="0.9" fill="#333">Montreal</text><text x="796.8" y="228.8" text-anchor="middle" font-size="11" font-weight="bold" letter-spacing="0.9" fill="none" stroke="#fff" stroke-opacity="0.85" stroke-width="2.2" stroke-linejoin="round">Boston</text><text x="796.8" y="228.8" text-anchor="middle" font-size="11" font-weight="bold" letter-spacing="0.9" fill="#333">Boston</text><text x="764" y="253" text-anchor="middle" font-size="11" font-weight="bold" letter-spacing="0.9" fill="none" stroke="#fff" stroke-opacity="0.85" stroke-width="2.2" stroke-linejoin="round">New York</text><text x="764" y="253" text-anchor="middle" font-size="11" font-weight="bold" letter-spacing="0.9" fill="#333">New York</text><text x="729.4" y="279.5" text-anchor="middle" font-size="11" font-weight="bold" letter-spacing="0.9" fill="none" stroke="#fff" stroke-opacity="0.85" stroke-width="2.2" stroke-linejoin="round">Washington</text><text x="729.4" y="279.5" text-anchor="middle" font-size="11" font-weight="bold" letter-spacing="0.9" fill="#333">Washington</text>
<circle cx="225.6" cy="152.5" r="4.5" fill="#cb1c2e" fill-opacity="0.94" stroke="#ad2430" stroke-opacity="0.55" stroke-width="0.8"/><circle cx="339.2" cy="258.2" r="5.6" fill="#cb1c2e" fill-opacity="0.94" stroke="#ad2430" stroke-opacity="0.55" stroke-width="0.8"/><circle cx="343.5" cy="260.7" r="5.2" fill="#cb1c2e" fill-opacity="0.94" stroke="#ad2430" stroke-opacity="0.55" stroke-width="0.8"/><circle cx="415.3" cy="274.2" r="4.8" fill="#cb1c2e" fill-opacity="0.94" stroke="#ad2430" stroke-opacity="0.55" stroke-width="0.8"/><circle cx="419.5" cy="273.2" r="4.8" fill="#cb1c2e" fill-opacity="0.94" stroke="#ad2430" stroke-opacity="0.55" stroke-width="0.8"/><circle cx="234.4" cy="290.7" r="6.6" fill="#cb1c2e" fill-opacity="0.94" stroke="#ad2430" stroke-opacity="0.55" stroke-width="0.8"/><circle cx="223.7" cy="303.1" r="11.6" fill="#cb1c2e" fill-opacity="0.94" stroke="#ad2430" stroke-opacity="0.55" stroke-width="0.8"/><circle cx="243.4" cy="308.8" r="3.9" fill="#cb1c2e" fill-opacity="0.94" stroke="#ad2430" stroke-opacity="0.55" stroke-width="0.8"/><circle cx="321.8" cy="312.8" r="5" fill="#cb1c2e" fill-opacity="0.94" stroke="#ad2430" stroke-opacity="0.55" stroke-width="0.8"/><circle cx="285.3" cy="324.4" r="4" fill="#cb1c2e" fill-opacity="0.94" stroke="#ad2430" stroke-opacity="0.55" stroke-width="0.8"/><circle cx="339.3" cy="361.8" r="8.8" fill="#cb1c2e" fill-opacity="0.94" stroke="#ad2430" stroke-opacity="0.55" stroke-width="0.8"/><circle cx="654" cy="233.2" r="10.6" fill="#cb1c2e" fill-opacity="0.94" stroke="#ad2430" stroke-opacity="0.55" stroke-width="0.8"/><circle cx="708.5" cy="226.6" r="4.7" fill="#cb1c2e" fill-opacity="0.94" stroke="#ad2430" stroke-opacity="0.55" stroke-width="0.8"/><circle cx="678.2" cy="255.9" r="5" fill="#cb1c2e" fill-opacity="0.94" stroke="#ad2430" stroke-opacity="0.55" stroke-width="0.8"/><circle cx="661.3" cy="271.7" r="6" fill="#cb1c2e" fill-opacity="0.94" stroke="#ad2430" stroke-opacity="0.55" stroke-width="0.8"/><circle cx="695.9" cy="264.7" r="4" fill="#cb1c2e" fill-opacity="0.94" stroke="#ad2430" stroke-opacity="0.55" stroke-width="0.8"/><circle cx="759.2" cy="265.7" r="4" fill="#cb1c2e" fill-opacity="0.94" stroke="#ad2430" stroke-opacity="0.55" stroke-width="0.8"/><circle cx="727.6" cy="287.6" r="6.3" fill="#cb1c2e" fill-opacity="0.94" stroke="#ad2430" stroke-opacity="0.55" stroke-width="0.8"/><circle cx="690.8" cy="310.7" r="4.8" fill="#cb1c2e" fill-opacity="0.94" stroke="#ad2430" stroke-opacity="0.55" stroke-width="0.8"/><circle cx="647.8" cy="355.2" r="5.7" fill="#cb1c2e" fill-opacity="0.94" stroke="#ad2430" stroke-opacity="0.55" stroke-width="0.8"/><circle cx="505.4" cy="370.3" r="5.1" fill="#cb1c2e" fill-opacity="0.94" stroke="#ad2430" stroke-opacity="0.55" stroke-width="0.8"/><circle cx="498.1" cy="404.4" r="4.9" fill="#cb1c2e" fill-opacity="0.94" stroke="#ad2430" stroke-opacity="0.55" stroke-width="0.8"/><circle cx="523.1" cy="410.6" r="4.4" fill="#cb1c2e" fill-opacity="0.94" stroke="#ad2430" stroke-opacity="0.55" stroke-width="0.8"/><circle cx="676.6" cy="401.9" r="5.7" fill="#cb1c2e" fill-opacity="0.94" stroke="#ad2430" stroke-opacity="0.55" stroke-width="0.8"/><circle cx="680.2" cy="403.8" r="5.7" fill="#cb1c2e" fill-opacity="0.94" stroke="#ad2430" stroke-opacity="0.55" stroke-width="0.8"/><circle cx="681" cy="427.9" r="6.9" fill="#cb1c2e" fill-opacity="0.94" stroke="#ad2430" stroke-opacity="0.55" stroke-width="0.8"/><circle cx="692.8" cy="460" r="4" fill="#cb1c2e" fill-opacity="0.94" stroke="#ad2430" stroke-opacity="0.55" stroke-width="0.8"/><circle cx="225.3" cy="301.6" r="6.2" fill="none" stroke="#e0505c" stroke-opacity="0.55" stroke-width="0.7"/><circle cx="227.8" cy="308" r="3.6" fill="none" stroke="#e0505c" stroke-opacity="0.55" stroke-width="0.7"/><circle cx="221" cy="304.5" r="8.5" fill="none" stroke="#e0505c" stroke-opacity="0.55" stroke-width="0.7"/><circle cx="233.4" cy="290.3" r="3.6" fill="none" stroke="#e0505c" stroke-opacity="0.55" stroke-width="0.7"/><circle cx="655" cy="232.6" r="6" fill="none" stroke="#e0505c" stroke-opacity="0.55" stroke-width="0.7"/><circle cx="653" cy="235" r="3.4" fill="none" stroke="#e0505c" stroke-opacity="0.55" stroke-width="0.7"/><circle cx="339.6" cy="361.5" r="5.2" fill="none" stroke="#e0505c" stroke-opacity="0.55" stroke-width="0.7"/><circle cx="339.3" cy="361.8" r="2.4" fill="none" stroke="#e0505c" stroke-opacity="0.55" stroke-width="0.7"/><circle cx="681.2" cy="427.6" r="3.8" fill="none" stroke="#e0505c" stroke-opacity="0.55" stroke-width="0.7"/><circle cx="727.8" cy="287.4" r="3.4" fill="none" stroke="#e0505c" stroke-opacity="0.55" stroke-width="0.7"/><circle cx="661.5" cy="271.5" r="3.2" fill="none" stroke="#e0505c" stroke-opacity="0.55" stroke-width="0.7"/>
<rect x="20.5" y="125.2" width="55.3" height="30.6" fill="#f8f8f8" fill-opacity="0.97"/><line x1="51.7" y1="126" x2="51.7" y2="155" stroke="#e6e6e6" stroke-width="1"/><g fill="none" stroke="#5a5a5a" stroke-width="1.05" stroke-linejoin="round"><path d="M34.7 133.4H43.6V142.3H36.5"/><path d="M38.6 134L40.3 137.4L42.4 135.4L41.4 141"/><path d="M28.7 134.3L29 143.8L31.4 141.5L33.6 146L34.9 145.3L33 140.8L36 140.2Z" fill="#f8f8f8"/></g><path d="M57.9 138.4H70L63.9 143.8Z" fill="none" stroke="#666" stroke-width="1.1" stroke-linejoin="round"/><path d="M96 131L101.7 142H90.5Z" fill="#111"/><path d="M96.2 153.2L101.7 142H90.5Z" fill="#fff" stroke="#6a6a6a" stroke-width="0.9" stroke-linejoin="round"/><rect x="970.9" y="125.6" width="32.2" height="31.2" fill="#f7f7f7" fill-opacity="0.95"/><path d="M980.5 149V142L982.8 139.6V134.4H984.9V137.5L987.4 135L994 142V149H989.7V143.3H984.7V149Z" fill="none" stroke="#444" stroke-width="1.2" stroke-linejoin="round"/><rect x="973.8" y="511.7" width="29.4" height="55.5" fill="#f5f5f5" fill-opacity="0.96"/><path d="M982 525.7H994.6M988.3 519.4V532M982 551.8H994.6" stroke="#555" stroke-width="1.6" fill="none"/><rect x="817.5" y="572.5" width="182.8" height="14.8" fill="#fff" fill-opacity="0.7"/><text x="822" y="584.1" font-size="12" fill="#585858" letter-spacing="0.27">Esri, Garmin, FAO, NOAA, EPA</text><path d="M13.4 413.5V419M13.4 434.5V440" stroke="#7f9cba" stroke-width="1" stroke-opacity="0.55" fill="none"/><path d="M39 557V566.6M39 561.8H143.1M143.1 557V561.8M138.8 561.8V566.6" stroke="#3d4c5c" stroke-width="1.8" fill="none"/><text x="137.3" y="556" font-size="11" fill="#5f7182" letter-spacing="0.15">1000km</text><text x="133" y="575.8" font-size="11" fill="#5f7182" letter-spacing="0.15">600mi</text>
</svg>
</section>
<section aria-label="Testing sites by ROAD TYPE">
<div class="abs panel" style="left:13px;top:603px;width:567.5px;height:236.5px"></div>
<h2 class="abs ptitle" style="left:19.3px;top:610.5px">Testing sites by ROAD TYPE</h2>
<svg class="abs" style="left:0;top:640px" width="590" height="200" viewBox="0 640 590 200">
<line x1="63" y1="744.8" x2="548.8" y2="744.8" stroke="#e7e7e7" stroke-width="1"/>
<line x1="63" y1="699.5" x2="548.8" y2="699.5" stroke="#e7e7e7" stroke-width="1"/>
<line x1="63" y1="654.3" x2="548.8" y2="654.3" stroke="#e7e7e7" stroke-width="1"/>
<line x1="123.7" y1="654.3" x2="123.7" y2="790" stroke="#e7e7e7" stroke-width="1"/>
<line x1="184.4" y1="654.3" x2="184.4" y2="790" stroke="#e7e7e7" stroke-width="1"/>
<line x1="245.2" y1="654.3" x2="245.2" y2="790" stroke="#e7e7e7" stroke-width="1"/>
<line x1="305.9" y1="654.3" x2="305.9" y2="790" stroke="#e7e7e7" stroke-width="1"/>
<line x1="366.6" y1="654.3" x2="366.6" y2="790" stroke="#e7e7e7" stroke-width="1"/>
<line x1="427.3" y1="654.3" x2="427.3" y2="790" stroke="#e7e7e7" stroke-width="1"/>
<line x1="488" y1="654.3" x2="488" y2="790" stroke="#e7e7e7" stroke-width="1"/>
<line x1="548.8" y1="654.3" x2="548.8" y2="790" stroke="#e7e7e7" stroke-width="1"/>
<line x1="63" y1="654.3" x2="63" y2="790" stroke="#bdbdbd" stroke-width="1"/>
<line x1="57" y1="790" x2="548.8" y2="790" stroke="#bdbdbd" stroke-width="1"/>
<rect x="68.1" y="680.9" width="50" height="109.5" fill="#fdc90b"/>
<rect x="128.8" y="717.1" width="50" height="73.3" fill="#fdc90b"/>
<rect x="189.5" y="762.4" width="50" height="28" fill="#fdc90b"/>
<rect x="250.3" y="771.4" width="50" height="19" fill="#fdc90b"/>
<rect x="311" y="775.9" width="50" height="14.5" fill="#fdc90b"/>
<rect x="371.7" y="775.9" width="50" height="14.5" fill="#fdc90b"/>
<rect x="432.4" y="775.9" width="50" height="14.5" fill="#fdc90b"/>
<rect x="493.1" y="780.5" width="50" height="9.9" fill="#fdc90b"/>
<line x1="57" y1="744.8" x2="63" y2="744.8" stroke="#bdbdbd" stroke-width="1"/>
<line x1="57" y1="699.5" x2="63" y2="699.5" stroke="#bdbdbd" stroke-width="1"/>
<line x1="57" y1="654.3" x2="63" y2="654.3" stroke="#bdbdbd" stroke-width="1"/>
<text x="50.5" y="794" text-anchor="end" font-size="11.5" fill="#787878">0</text>
<text x="50.5" y="748.8" text-anchor="end" font-size="11.5" fill="#787878">10</text>
<text x="50.5" y="703.5" text-anchor="end" font-size="11.5" fill="#787878">20</text>
<text x="50.5" y="658.3" text-anchor="end" font-size="11.5" fill="#787878">30</text>
<line x1="93.4" y1="790" x2="93.4" y2="795" stroke="#bdbdbd" stroke-width="1"/>
<text x="93.4" y="813" text-anchor="middle" font-size="11" fill="#787878">Street</text>
<line x1="154.1" y1="790" x2="154.1" y2="795" stroke="#bdbdbd" stroke-width="1"/>
<text x="154.1" y="813" text-anchor="middle" font-size="11" fill="#787878">Not</text>
<text x="154.1" y="825.5" text-anchor="middle" font-size="11" fill="#787878">Specified</text>
<line x1="214.8" y1="790" x2="214.8" y2="795" stroke="#bdbdbd" stroke-width="1"/>
<text x="214.8" y="813" text-anchor="middle" font-size="11" fill="#787878">Parking Lot</text>
<line x1="275.5" y1="790" x2="275.5" y2="795" stroke="#bdbdbd" stroke-width="1"/>
<text x="275.5" y="813" text-anchor="middle" font-size="11" fill="#787878">University</text>
<line x1="336.2" y1="790" x2="336.2" y2="795" stroke="#bdbdbd" stroke-width="1"/>
<text x="336.2" y="813" text-anchor="middle" font-size="11" fill="#787878">Business</text>
<text x="336.2" y="825.5" text-anchor="middle" font-size="11" fill="#787878">Campus</text>
<line x1="397" y1="790" x2="397" y2="795" stroke="#bdbdbd" stroke-width="1"/>
<text x="397" y="813" text-anchor="middle" font-size="11" fill="#787878">Freeway</text>
<line x1="457.7" y1="790" x2="457.7" y2="795" stroke="#bdbdbd" stroke-width="1"/>
<text x="457.7" y="813" text-anchor="middle" font-size="11" fill="#787878">Highway</text>
<line x1="518.4" y1="790" x2="518.4" y2="795" stroke="#bdbdbd" stroke-width="1"/>
<text x="518.4" y="813" text-anchor="middle" font-size="11" fill="#787878">Path /</text>
<text x="518.4" y="825.5" text-anchor="middle" font-size="11" fill="#787878">Sidewalk</text>
</svg>
</section>
<section aria-label="Testing sites by VEHICLE TYPE">
<div class="abs panel" style="left:590.5px;top:603px;width:420.5px;height:236.5px"></div>
<h2 class="abs ptitle" style="left:597px;top:610.5px">Testing sites by VEHICLE TYPE</h2>
<svg class="abs" style="left:592px;top:640px" width="418" height="198" viewBox="592 640 418 198">
<line x1="701.2" y1="655" x2="979.6" y2="655" stroke="#e7e7e7" stroke-width="1"/>
<line x1="701.2" y1="676" x2="979.6" y2="676" stroke="#e7e7e7" stroke-width="1"/>
<line x1="701.2" y1="697.1" x2="979.6" y2="697.1" stroke="#e7e7e7" stroke-width="1"/>
<line x1="701.2" y1="718.1" x2="979.6" y2="718.1" stroke="#e7e7e7" stroke-width="1"/>
<line x1="701.2" y1="739.2" x2="979.6" y2="739.2" stroke="#e7e7e7" stroke-width="1"/>
<line x1="701.2" y1="760.2" x2="979.6" y2="760.2" stroke="#e7e7e7" stroke-width="1"/>
<line x1="701.2" y1="781.3" x2="979.6" y2="781.3" stroke="#e7e7e7" stroke-width="1"/>
<line x1="840.4" y1="655" x2="840.4" y2="802.3" stroke="#e7e7e7" stroke-width="1"/>
<line x1="979.6" y1="655" x2="979.6" y2="802.3" stroke="#e7e7e7" stroke-width="1"/>
<rect x="701.2" y="656.2" width="237.2" height="17" fill="#fdc90b"/>
<rect x="701.2" y="677.2" width="167.6" height="17" fill="#fdc90b"/>
<rect x="701.2" y="698.3" width="49.3" height="17" fill="#fdc90b"/>
<rect x="701.2" y="719.3" width="35.4" height="17" fill="#fdc90b"/>
<rect x="701.2" y="740.4" width="7.6" height="17" fill="#fdc90b"/>
<rect x="701.2" y="761.4" width="7.6" height="17" fill="#fdc90b"/>
<rect x="701.2" y="782.5" width="7.6" height="17" fill="#fdc90b"/>
<line x1="701.2" y1="655" x2="701.2" y2="807.3" stroke="#bdbdbd" stroke-width="1"/>
<line x1="701.2" y1="802.3" x2="979.6" y2="802.3" stroke="#bdbdbd" stroke-width="1"/>
<line x1="840.4" y1="802.3" x2="840.4" y2="807.3" stroke="#bdbdbd" stroke-width="1"/>
<line x1="979.6" y1="802.3" x2="979.6" y2="807.3" stroke="#bdbdbd" stroke-width="1"/>
<text x="700.8" y="825.5" text-anchor="middle" font-size="11.5" fill="#787878">0</text>
<text x="839.9" y="825.5" text-anchor="middle" font-size="11.5" fill="#787878">20</text>
<text x="979.1" y="825.5" text-anchor="middle" font-size="11.5" fill="#787878">40</text>
<line x1="695.2" y1="665.5" x2="701.2" y2="665.5" stroke="#bdbdbd" stroke-width="1"/>
<text x="689" y="669.5" text-anchor="end" font-size="11" fill="#787878">Shuttle</text>
<line x1="695.2" y1="686.6" x2="701.2" y2="686.6" stroke="#bdbdbd" stroke-width="1"/>
<text x="689" y="690.6" text-anchor="end" font-size="11" fill="#787878">Car</text>
<line x1="695.2" y1="707.6" x2="701.2" y2="707.6" stroke="#bdbdbd" stroke-width="1"/>
<text x="689" y="711.6" text-anchor="end" font-size="11" fill="#787878">Delivery Robot</text>
<line x1="695.2" y1="728.6" x2="701.2" y2="728.6" stroke="#bdbdbd" stroke-width="1"/>
<text x="689" y="732.6" text-anchor="end" font-size="11" fill="#787878">SUV</text>
<line x1="695.2" y1="749.7" x2="701.2" y2="749.7" stroke="#bdbdbd" stroke-width="1"/>
<text x="689" y="753.7" text-anchor="end" font-size="11" fill="#787878">Heavy Truck</text>
<line x1="695.2" y1="770.7" x2="701.2" y2="770.7" stroke="#bdbdbd" stroke-width="1"/>
<text x="689" y="774.7" text-anchor="end" font-size="11" fill="#787878">Mixed Fleet</text>
<line x1="695.2" y1="791.8" x2="701.2" y2="791.8" stroke="#bdbdbd" stroke-width="1"/>
<text x="689" y="795.8" text-anchor="end" font-size="11" fill="#787878">Other</text>
</svg>
</section>
</main>
</body>
</html>
